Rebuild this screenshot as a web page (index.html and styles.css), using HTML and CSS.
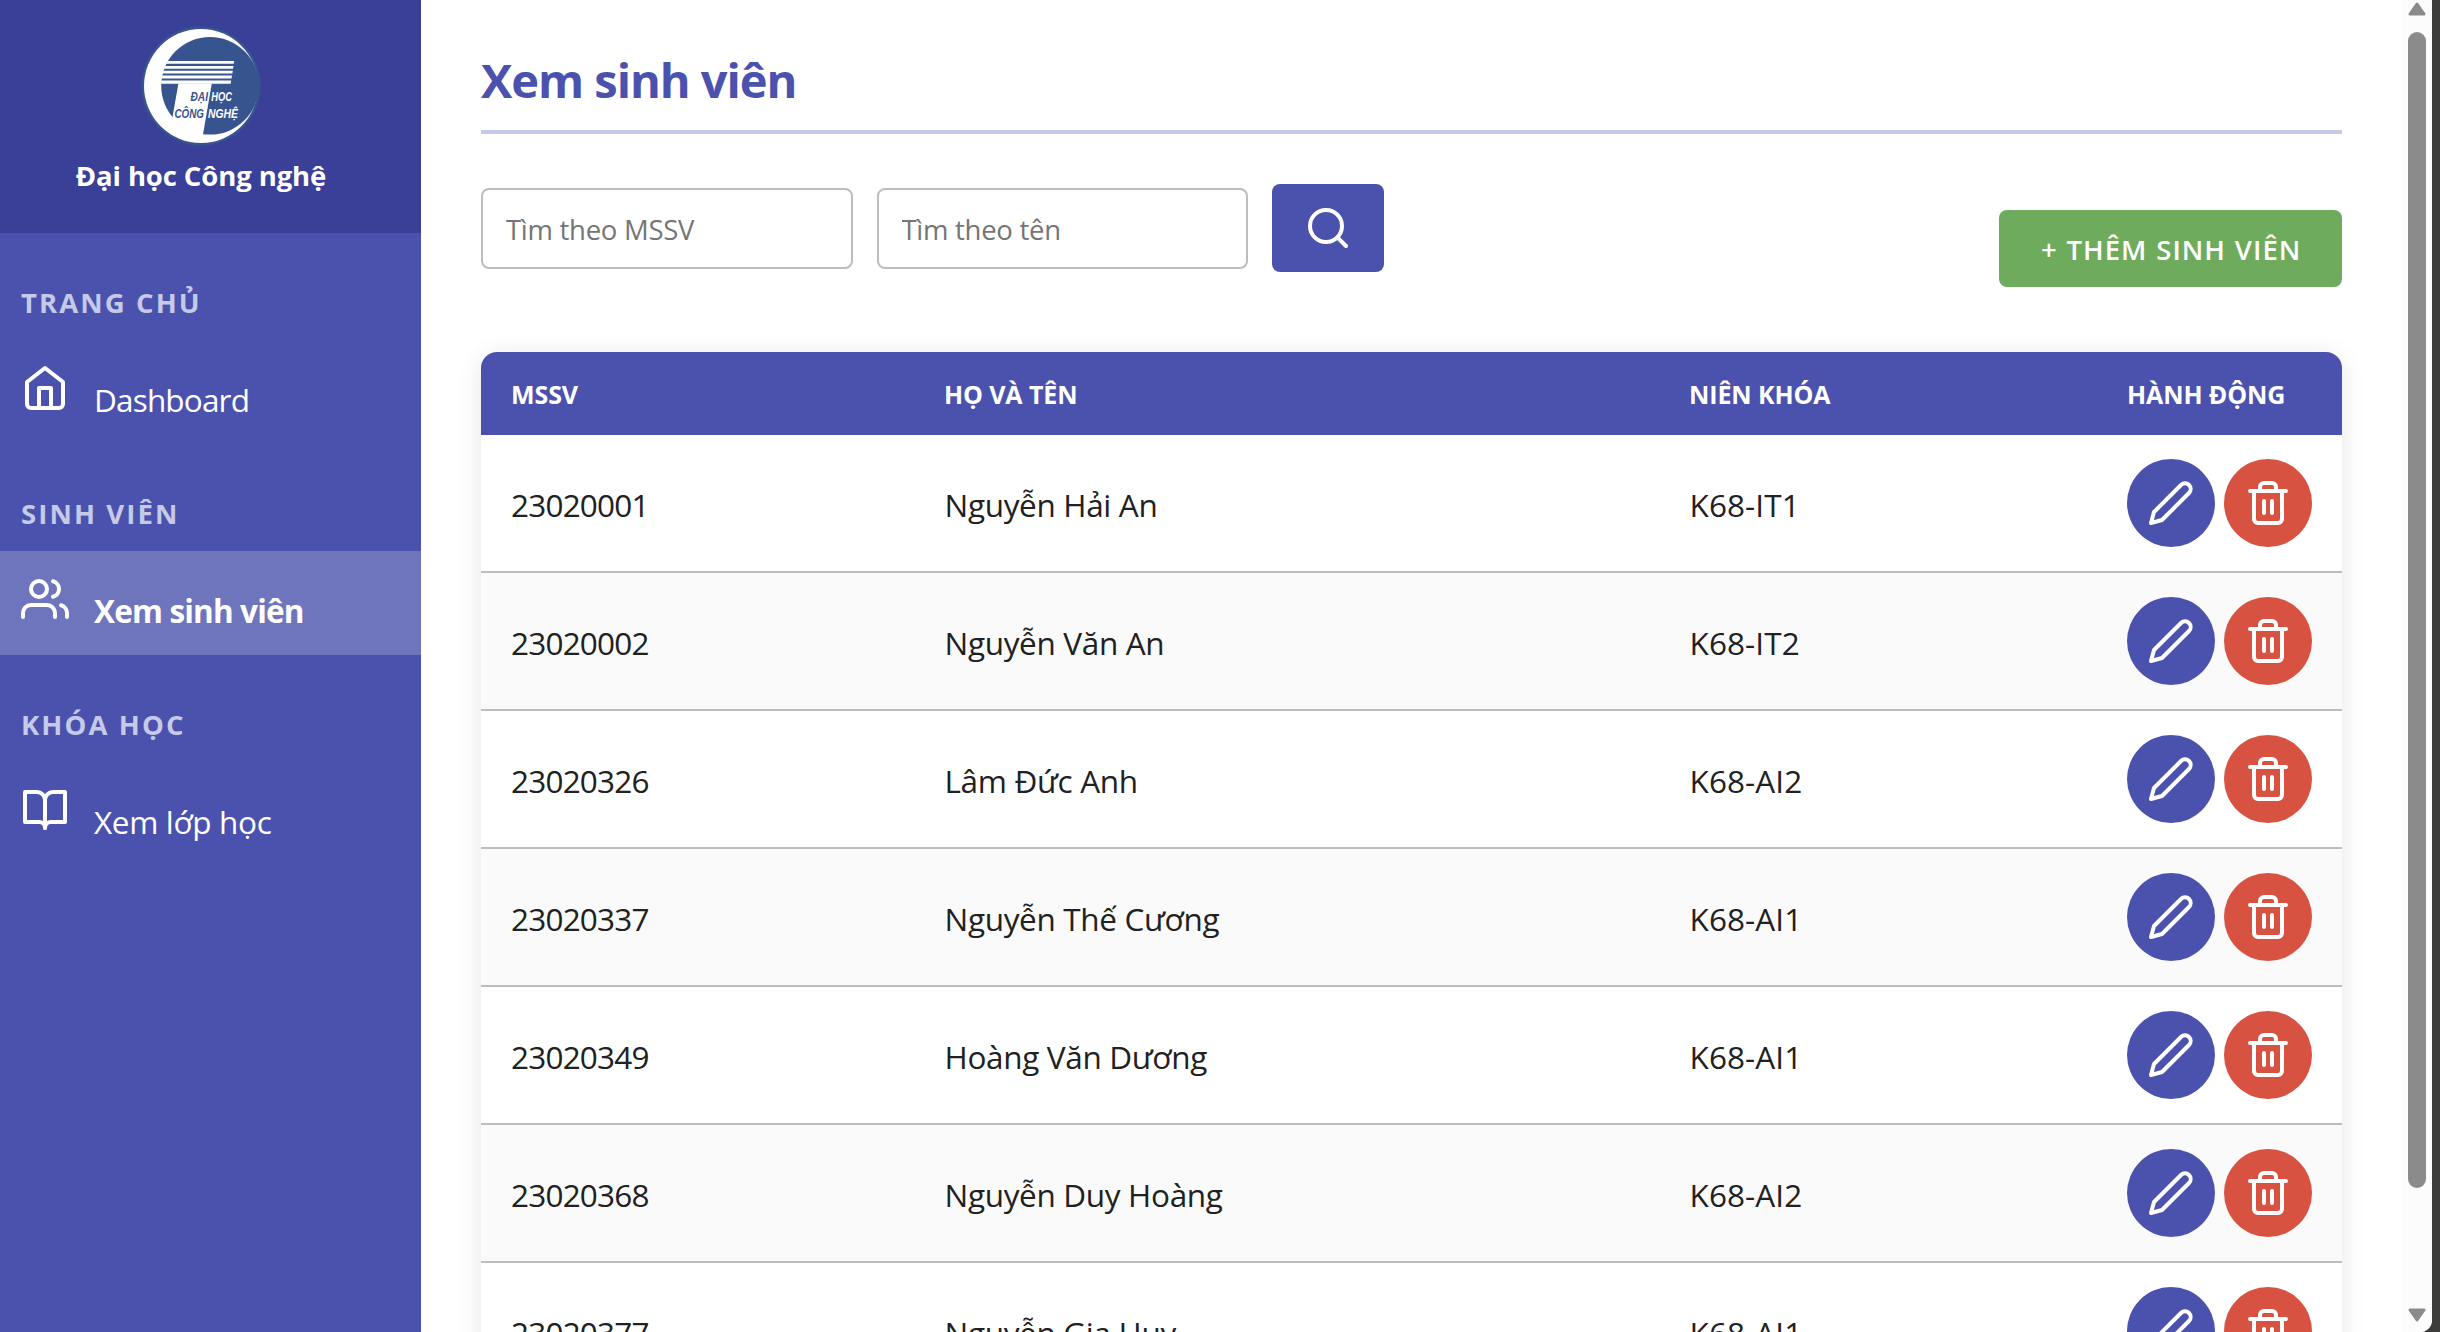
FILE: index.html
```html
<!DOCTYPE html>
<html lang="vi">
<head>
<meta charset="utf-8">
<title>Xem sinh viên</title>
<link rel="stylesheet" href="styles.css">
</head>
<body>
<svg class="sprite" aria-hidden="true">
  <symbol id="edit" viewBox="0 0 24 24"><path d="M17 3a2.828 2.828 0 1 1 4 4L7.5 20.5 2 22l1.5-5.5L17 3z"/></symbol>
  <symbol id="trash" viewBox="0 0 24 24"><path d="M3 6h18M19 6v14a2 2 0 0 1-2 2H7a2 2 0 0 1-2-2V6m3 0V4a2 2 0 0 1 2-2h4a2 2 0 0 1 2 2v2M10 11v6M14 11v6"/></symbol>
</svg>
<div class="app">
  <aside class="sidebar">
    <header class="brand">
      <svg class="logo" viewBox="0 0 120 120">
        <defs><clipPath id="disc"><circle cx="60" cy="60" r="57"/></clipPath></defs>
        <circle cx="60" cy="60" r="59.5" fill="#37548f"/>
        <circle cx="60" cy="60" r="57" fill="#fff"/>
        <circle cx="69" cy="59.8" r="48.8" fill="#37548f"/>
        <g clip-path="url(#disc)" fill="#fff">
          <path d="M27 35H93.2L92.8 37.8H24.5z"/>
          <path d="M24.5 40H92.5L92 42.8H22.5z"/>
          <path d="M22.5 44.8H91.8L91.4 47.6H21z"/>
          <path d="M20.8 49.6H91L90.5 52.4H20.2z"/>
          <path d="M20.2 54.4H90.2L89.6 57.8H20z"/>
          <path d="M37.4 57.5H70.8L61.8 109.5H29L31.7 90z"/>
        </g>
        <g class="logo-text">
          <text x="49.5" y="75" textLength="17.5" lengthAdjust="spacingAndGlyphs" fill="#37548f">ĐẠI</text>
          <text x="70.3" y="75" textLength="20.7" lengthAdjust="spacingAndGlyphs" fill="#fff">HỌC</text>
          <text x="33.5" y="92" textLength="29.5" lengthAdjust="spacingAndGlyphs" fill="#37548f">CÔNG</text>
          <text x="67" y="92" textLength="30" lengthAdjust="spacingAndGlyphs" fill="#fff">NGHỆ</text>
        </g>
      </svg>
      <div class="brand-name">Đại học Công nghệ</div>
    </header>
    <nav>
      <h2 class="nav-label">TRANG CHỦ</h2>
      <a class="nav-item">
        <svg class="icon" viewBox="0 0 24 24"><path d="M3 9l9-7 9 7v11a2 2 0 0 1-2 2H5a2 2 0 0 1-2-2z"/><path d="M9 22V12h6v10"/></svg>
        <span class="tight">Dashboard</span>
      </a>
      <h2 class="nav-label">SINH VIÊN</h2>
      <a class="nav-item active">
        <svg class="icon" viewBox="0 0 24 24"><path d="M17 21v-2a4 4 0 0 0-4-4H5a4 4 0 0 0-4 4v2"/><circle cx="9" cy="7" r="4"/><path d="M23 21v-2a4 4 0 0 0-3-3.87M16 3.13a4 4 0 0 1 0 7.75"/></svg>
        <span class="tight">Xem sinh viên</span>
      </a>
      <h2 class="nav-label">KHÓA HỌC</h2>
      <a class="nav-item">
        <svg class="icon" viewBox="0 0 24 24"><path d="M2 3h6a4 4 0 0 1 4 4v14a3 3 0 0 0-3-3H2z"/><path d="M22 3h-6a4 4 0 0 0-4 4v14a3 3 0 0 1 3-3h7z"/></svg>
        <span>Xem lớp học</span>
      </a>
    </nav>
  </aside>

  <main class="content">
    <h1>Xem sinh viên</h1>
    <div class="toolbar">
      <form class="search">
        <input type="text" placeholder="Tìm theo MSSV">
        <input type="text" placeholder="Tìm theo tên">
        <button type="button" class="search-button" aria-label="Tìm"><svg class="icon" viewBox="0 0 24 24"><circle cx="11" cy="11" r="8"/><path d="M21 21l-4.35-4.35"/></svg></button>
      </form>
      <button type="button" class="add-button">+ THÊM SINH VIÊN</button>
    </div>
    <table class="students">
      <colgroup><col class="c-id"><col class="c-name"><col class="c-year"><col class="c-actions"></colgroup>
      <thead><tr><th>MSSV</th><th>HỌ VÀ TÊN</th><th>NIÊN KHÓA</th><th>HÀNH ĐỘNG</th></tr></thead>
      <tbody>
        <tr><td class="id">23020001</td><td>Nguyễn Hải An</td><td class="year">K68-IT1</td><td class="actions"><div><button class="edit"><svg class="icon"><use href="#edit"/></svg></button><button class="delete"><svg class="icon"><use href="#trash"/></svg></button></div></td></tr>
        <tr><td class="id">23020002</td><td>Nguyễn Văn An</td><td class="year">K68-IT2</td><td class="actions"><div><button class="edit"><svg class="icon"><use href="#edit"/></svg></button><button class="delete"><svg class="icon"><use href="#trash"/></svg></button></div></td></tr>
        <tr><td class="id">23020326</td><td>Lâm Đức Anh</td><td class="year">K68-AI2</td><td class="actions"><div><button class="edit"><svg class="icon"><use href="#edit"/></svg></button><button class="delete"><svg class="icon"><use href="#trash"/></svg></button></div></td></tr>
        <tr><td class="id">23020337</td><td>Nguyễn Thế Cương</td><td class="year">K68-AI1</td><td class="actions"><div><button class="edit"><svg class="icon"><use href="#edit"/></svg></button><button class="delete"><svg class="icon"><use href="#trash"/></svg></button></div></td></tr>
        <tr><td class="id">23020349</td><td>Hoàng Văn Dương</td><td class="year">K68-AI1</td><td class="actions"><div><button class="edit"><svg class="icon"><use href="#edit"/></svg></button><button class="delete"><svg class="icon"><use href="#trash"/></svg></button></div></td></tr>
        <tr><td class="id">23020368</td><td>Nguyễn Duy Hoàng</td><td class="year">K68-AI2</td><td class="actions"><div><button class="edit"><svg class="icon"><use href="#edit"/></svg></button><button class="delete"><svg class="icon"><use href="#trash"/></svg></button></div></td></tr>
        <tr><td class="id">23020377</td><td>Nguyễn Gia Huy</td><td class="year">K68-AI1</td><td class="actions"><div><button class="edit"><svg class="icon"><use href="#edit"/></svg></button><button class="delete"><svg class="icon"><use href="#trash"/></svg></button></div></td></tr>
      </tbody>
    </table>
  </main>

  <div class="scrollbar">
    <svg class="arrow" viewBox="0 0 18 14"><path d="M9 2L16 12H2z"/></svg>
    <div class="thumb"></div>
    <svg class="arrow" viewBox="0 0 18 14"><path d="M9 12L16 2H2z"/></svg>
  </div>
</div>
</body>
</html>
```
FILE: styles.css
```css
* {
  box-sizing: border-box;
}

body {
  margin: 0;
  height: 100vh;
  overflow: hidden;
  background: #3c3c3b;
  color: #212121;
  font-family: "Open Sans", "Noto Sans", sans-serif;
}

h1, h2 {
  margin: 0;
}

button {
  border: 0;
  padding: 0;
  color: #fff;
  font-family: inherit;
}

.sprite {
  display: none;
}

.icon {
  display: block;
  flex: none;
  width: 48px;
  height: 48px;
  fill: none;
  stroke: currentColor;
  stroke-width: 2;
  stroke-linecap: round;
  stroke-linejoin: round;
}

.app {
  display: flex;
  height: 100vh;
  margin-right: 8px;
  overflow: hidden;
  background: #fff;
  border-bottom-right-radius: 12px;
}

/* Sidebar */
.sidebar {
  flex: none;
  width: 421px;
  background: #4b52ad;
  color: #fff;
}

.brand {
  display: flex;
  flex-direction: column;
  align-items: center;
  height: 233px;
  padding: 26px 19px 0 0;
  background: #3a4098;
}

.logo {
  display: block;
  flex: none;
  width: 120px;
  height: 120px;
}

.logo-text {
  font: italic 700 12.5px "Liberation Sans", sans-serif;
}

.brand-name {
  margin-top: 11px;
  font-size: 27.5px;
  font-weight: 700;
  line-height: 37px;
  letter-spacing: -0.1px;
}

.nav-label {
  padding: 50px 21px 17px;
  color: #c5cae9;
  font-size: 27.5px;
  line-height: 40px;
  letter-spacing: 2.1px;
}

.nav-item {
  display: flex;
  align-items: flex-start;
  gap: 25px;
  height: 104px;
  padding: 24px 21px;
  font-size: 31.5px;
  line-height: 40px;
  letter-spacing: -0.35px;
}

.nav-item span {
  margin-top: 16px;
}

.nav-item .tight {
  letter-spacing: -0.83px;
}

.nav-item.active {
  background: #6f75bd;
  font-weight: 700;
}

/* Content */
.content {
  flex: 1;
  min-width: 0;
  padding: 48px 60px 0;
}

h1 {
  padding-bottom: 18px;
  border-bottom: 4px solid #c5cae9;
  color: #4b52ad;
  font-size: 47px;
  line-height: 64px;
  letter-spacing: -1.04px;
}

.toolbar {
  display: flex;
  justify-content: space-between;
  align-items: flex-start;
  height: 168px;
  margin-top: 50px;
}

.search {
  display: flex;
  align-items: flex-start;
  gap: 24px;
}

.search input {
  width: 371.5px;
  height: 81px;
  margin-top: 4px;
  padding: 2px 24px 0 23px;
  border: 2px solid #bdbdbd;
  border-radius: 8px;
  background: #fff;
  font-family: inherit;
  font-size: 27.5px;
  letter-spacing: -0.28px;
}

.search input::placeholder {
  color: #757575;
}

.search-button {
  display: flex;
  align-items: center;
  justify-content: center;
  width: 112px;
  height: 88px;
  border-radius: 8px;
  background: #4b52ad;
}

.add-button {
  width: 343px;
  height: 77px;
  margin-top: 26px;
  padding: 2px 0 0 42px;
  border-radius: 8px;
  background: #6fab5c;
  font-size: 27.5px;
  font-weight: 600;
  letter-spacing: 1px;
  word-spacing: 0.7px;
  text-align: left;
  white-space: nowrap;
}

/* Student table */
.students {
  width: 100%;
  table-layout: fixed;
  border-spacing: 0;
  overflow: hidden;
  border-radius: 16px;
  background: #fff;
  box-shadow: 0 4px 24px rgba(0, 0, 0, 0.1);
}

.c-id { width: 433px; }
.c-name { width: 745px; }
.c-year { width: 438px; }
.c-actions { width: 245px; }

th {
  height: 83px;
  padding: 0 0 0 30px;
  background: #4b52ad;
  color: #fff;
  font-size: 25px;
  font-weight: 700;
  letter-spacing: -0.1px;
  text-align: left;
}

td {
  height: 138px;
  padding: 3px 0 0 30.5px;
  border-bottom: 2px solid #bdbdbd;
  font-size: 31.5px;
  letter-spacing: -0.33px;
}

td.id {
  padding-left: 30px;
  letter-spacing: -0.8px;
}

td.year {
  letter-spacing: 0.1px;
}

td.actions {
  padding-top: 0;
  padding-left: 30px;
}

tbody tr:nth-child(even) {
  background: #fafafa;
}

.actions div {
  display: flex;
  gap: 9px;
}

.actions button {
  display: flex;
  align-items: center;
  justify-content: center;
  width: 88px;
  height: 88px;
  border-radius: 50%;
}

.edit {
  background: #4b52ad;
}

.delete {
  background: #d75241;
}

/* Scrollbar */
.scrollbar {
  display: flex;
  flex: none;
  flex-direction: column;
  align-items: center;
  width: 30px;
  padding: 2px 0 10px;
  background: #fcfcfc;
}

.arrow {
  display: block;
  width: 18px;
  height: 14px;
  fill: #8b8b8b;
  stroke: #8b8b8b;
  stroke-width: 3;
  stroke-linejoin: round;
}

.thumb {
  width: 18px;
  height: 1156px;
  margin: 16px 0 auto;
  border-radius: 9px;
  background: #8b8b8b;
}
```
